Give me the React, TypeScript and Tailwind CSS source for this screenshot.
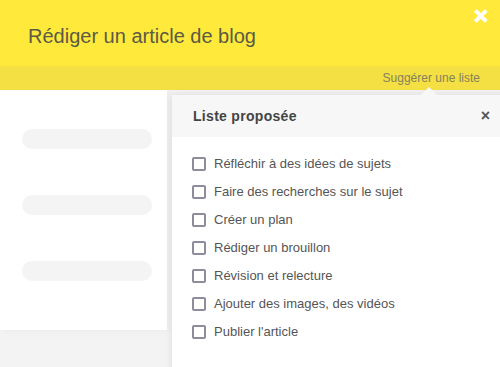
const items = [
  "Réfléchir à des idées de sujets",
  "Faire des recherches sur le sujet",
  "Créer un plan",
  "Rédiger un brouillon",
  "Révision et relecture",
  "Ajouter des images, des vidéos",
  "Publier l'article",
];

export default function App() {
  return (
    <div className="relative h-[367px] w-[500px] overflow-hidden bg-[#f3f3f3] font-['Liberation_Sans',Arial,sans-serif]">
      {/* header */}
      <div className="relative bg-[#ffea3c]">
        <div className="flex h-[66px] items-center pl-7 pt-[6px] text-[20px] text-[#5c5a45]">
          Rédiger un article de blog
        </div>
        <button className="absolute right-[12px] top-[4px] text-[24px] font-bold leading-none text-white [-webkit-text-stroke:1px_white]">
          ×
        </button>
        <div className="flex h-[24px] items-center justify-end bg-[#f5e043] pr-[20px] text-[12px] text-[#85805c]">
          Suggérer une liste
        </div>
      </div>

      {/* left card */}
      <div className="flex h-[240px] w-[167px] flex-col gap-[46px] bg-white pl-[22px] pt-[39px] shadow-[2px_0_6px_rgba(0,0,0,0.04)]">
        <div className="h-[20px] w-[130px] rounded-full bg-[#f4f4f4]" />
        <div className="h-[20px] w-[130px] rounded-full bg-[#f4f4f4]" />
        <div className="h-[20px] w-[130px] rounded-full bg-[#f4f4f4]" />
      </div>

      {/* popover */}
      <div className="absolute left-[172px] top-[95px] h-[290px] w-[340px] bg-white shadow-[0_0_8px_rgba(0,0,0,0.1)]">
        <div className="absolute -top-[8px] left-[248px] h-0 w-0 border-x-[9px] border-b-[9px] border-x-transparent border-b-[#f7f7f7]" />
        <div className="flex h-[42px] items-center justify-between bg-[#f7f7f7] pl-[21px] pr-[22px]">
          <span className="text-[14px] font-bold tracking-[0.3px] text-[#444]">Liste proposée</span>
          <span className="text-[16px] font-bold leading-none text-[#555]">×</span>
        </div>
        <ul className="flex flex-col gap-[14px] pl-[20px] pt-[20px]">
          {items.map((t) => (
            <li key={t} className="flex h-[14px] items-center gap-[8px]">
              <span className="h-[14px] w-[14px] rounded-[2px] border-2 border-[#8f8b9c]" />
              <span className="text-[13px] text-[#555]">{t}</span>
            </li>
          ))}
        </ul>
      </div>
    </div>
  );
}
